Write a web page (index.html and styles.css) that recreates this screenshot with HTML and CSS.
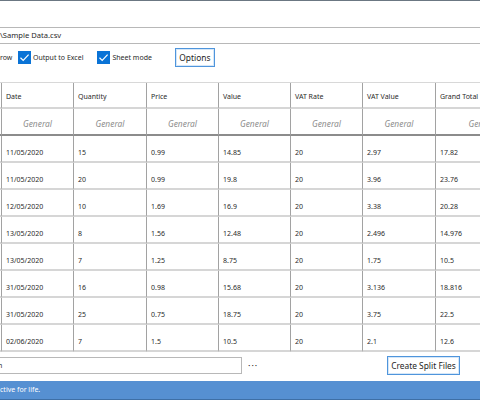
FILE: index.html
```html
<!DOCTYPE html>
<html lang="en">
<head>
    <meta charset="UTF-8">
    <title>CSV Splitter</title>
    <link rel="stylesheet" href="styles.css">
</head>
<body>
    <div class="window">
        <div class="top-line"></div>

        <!-- ficheiro de origem -->
        <div class="path-row">
            <div class="textbox path">\Sample Data.csv</div>
        </div>

        <div class="options-row">
            <span class="clipped">row</span>
            <label class="check">
                <svg width="13" height="13" viewBox="0 0 13 13"><rect width="13" height="13" fill="#0a73d6"/><path d="M2.5 6.8 L5.2 9.4 L10.6 3.6" fill="none" stroke="#fff" stroke-width="1.2"/></svg>
                Output to Excel
            </label>
            <label class="check">
                <svg width="13" height="13" viewBox="0 0 13 13"><rect width="13" height="13" fill="#0a73d6"/><path d="M2.5 6.8 L5.2 9.4 L10.6 3.6" fill="none" stroke="#fff" stroke-width="1.2"/></svg>
                Sheet mode
            </label>
            <button class="btn options-btn">Options</button>
        </div>

        <!-- grelha de dados -->
        <div class="grid-wrap">
            <table class="grid">
                <colgroup>
                    <col class="stub">
                    <col class="c72">
                    <col class="c73">
                    <col class="c72">
                    <col class="c72">
                    <col class="c72">
                    <col class="c73">
                    <col class="last">
                </colgroup>
                <tr class="head">
                    <td></td><td>Date</td><td>Quantity</td><td>Price</td><td>Value</td><td>VAT Rate</td><td>VAT Value</td><td>Grand Total</td>
                </tr>
                <tr class="format">
                    <td></td><td>General</td><td>General</td><td>General</td><td>General</td><td>General</td><td>General</td><td>General</td>
                </tr>
                <tr><td></td><td>11/05/2020</td><td>15</td><td>0.99</td><td>14.85</td><td>20</td><td>2.97</td><td>17.82</td></tr>
                <tr><td></td><td>11/05/2020</td><td>20</td><td>0.99</td><td>19.8</td><td>20</td><td>3.96</td><td>23.76</td></tr>
                <tr><td></td><td>12/05/2020</td><td>10</td><td>1.69</td><td>16.9</td><td>20</td><td>3.38</td><td>20.28</td></tr>
                <tr><td></td><td>13/05/2020</td><td>8</td><td>1.56</td><td>12.48</td><td>20</td><td>2.496</td><td>14.976</td></tr>
                <tr><td></td><td>13/05/2020</td><td>7</td><td>1.25</td><td>8.75</td><td>20</td><td>1.75</td><td>10.5</td></tr>
                <tr><td></td><td>31/05/2020</td><td>16</td><td>0.98</td><td>15.68</td><td>20</td><td>3.136</td><td>18.816</td></tr>
                <tr><td></td><td>31/05/2020</td><td>25</td><td>0.75</td><td>18.75</td><td>20</td><td>3.75</td><td>22.5</td></tr>
                <tr><td></td><td>02/06/2020</td><td>7</td><td>1.5</td><td>10.5</td><td>20</td><td>2.1</td><td>12.6</td></tr>
            </table>
        </div>

        <div class="bottom-row">
            <div class="textbox short"><span class="tail">n</span></div>
            <span class="dots">···</span>
            <button class="btn split-btn">Create Split Files</button>
        </div>

        <div class="status-bar">ctive for life.</div>
    </div>
</body>
</html>
```

FILE: styles.css
```css
body {
    margin: 0;
    background-color: #fff;
    font-family: "Noto Sans", "Open Sans", sans-serif;
    font-size: 7px;
    color: #2a2a2a;
    overflow: hidden;
}
.window {
    width: 480px;
    height: 400px;
    display: flex;
    flex-direction: column;
    overflow: hidden;
}
.top-line {
    height: 1px;
    background-color: #6b7782;
}
.path-row {
    margin-top: 26px;
}
.textbox {
    height: 15px;
    border-top: 1px solid #b8b8b8;
    border-bottom: 1px solid #b8b8b8;
    line-height: 15px;
    white-space: nowrap;
}
.textbox.path {
    font-size: 7.6px;
}
.options-row {
    display: flex;
    align-items: center;
    height: 20px;
    margin-top: 3px;
}
.clipped {
    width: 18px;
}
.check {
    display: flex;
    align-items: center;
    gap: 2px;
    margin-right: 14px;
}
.check svg {
    display: block;
}
.btn {
    font-family: inherit;
    font-size: 8.4px;
    color: #1e1e1e;
    background-color: #fff;
    border: 1px solid #4f95dc;
    box-shadow: inset 0 0 0 1px #d5e7f8;
    padding: 0;
    height: 19px;
}
.options-btn {
    width: 40px;
    margin-left: 9px;
}
.grid-wrap {
    margin-top: 15px;
    height: 270px;
    overflow: hidden;
}
.grid {
    border-collapse: separate;
    border-spacing: 0;
    table-layout: fixed;
    width: 531px;
    border-top: 1px solid #d8d8d8;
}
.stub { width: 2px; }
.c72 { width: 72px; }
.c73 { width: 73px; }
.last { width: 95px; }
.grid td {
    box-sizing: border-box;
    height: 27px;
    padding: 8px 0 0 4px;
    border-right: 1px solid #a2a2a2;
    border-bottom: 2px solid #d6d6d6;
    white-space: nowrap;
    overflow: hidden;
}
.grid td:first-child {
    padding: 0;
}
.grid .head td {
    height: 26px;
    padding-top: 2px;
}
.grid .format td {
    border-bottom-color: #8c8c8c;
    text-align: center;
    font-style: italic;
    font-size: 8.4px;
    color: #8e8e8e;
    padding: 4px 0 0 0;
}
.bottom-row {
    display: flex;
    align-items: center;
    margin-top: 4px;
    height: 18px;
}
.textbox.short {
    width: 241px;
    border-right: 1px solid #b8b8b8;
    overflow: hidden;
}
.tail {
    margin-left: -2px;
}
.dots {
    margin-left: 6px;
    font-size: 9px;
    letter-spacing: 1px;
}
.split-btn {
    width: 73px;
    margin-left: auto;
    margin-right: 20px;
}
.status-bar {
    margin-top: auto;
    height: 18px;
    line-height: 17px;
    background-color: #5690d2;
    border-bottom: 1px solid #3e6fa6;
    color: #fff;
}
```
